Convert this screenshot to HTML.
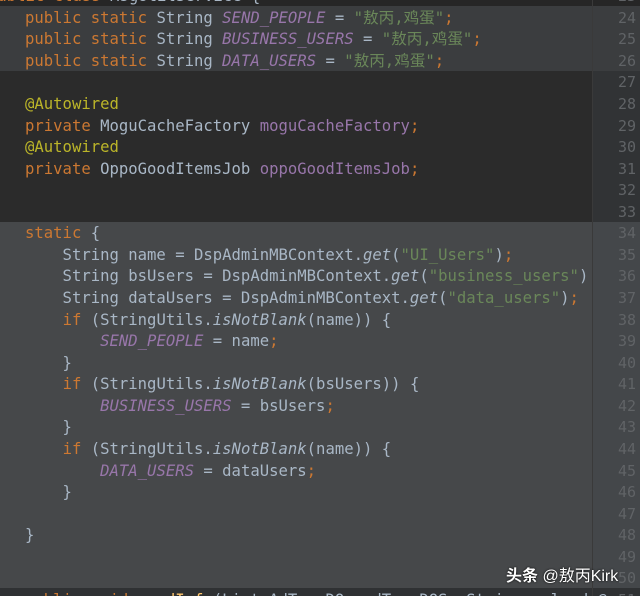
<!DOCTYPE html>
<html><head><meta charset="utf-8"><style>
html,body{margin:0;padding:0;width:640px;height:596px;overflow:hidden;background:#2b2b2b;}
#w{position:relative;width:640px;height:596px;overflow:hidden;}
.bg{position:absolute;left:0;width:640px;}
.ln{position:absolute;left:0;height:21.56px;line-height:21.56px;margin-top:1.5px;font-family:"DejaVu Sans Mono","Liberation Mono","Noto Sans CJK SC",monospace;font-size:15.6px;color:#a9b7c6;white-space:pre;}
.num{position:absolute;right:4px;width:40px;text-align:right;height:21.56px;line-height:21.56px;margin-top:1.5px;font-family:"DejaVu Sans Mono",monospace;font-size:15px;color:#606366;}
.k{color:#cc7832}.c{color:#9876aa;font-style:italic}.s{color:#6a8759}.a{color:#bbb529}.i{font-style:italic}
.f{color:#9876aa}
</style></head><body><div id="w">
<div class="bg" style="top:0;height:6px;background:#262626"></div>
<div class="bg" style="top:6px;height:65px;background:#3b3d3f"></div>
<div class="bg" style="top:71px;height:151px;background:#2b2b2b"></div>
<div class="bg" style="top:222px;height:366px;background:#46484a"></div>
<div class="bg" style="top:588px;height:8px;background:#2f3133"></div>
<div style="position:absolute;left:592px;top:0;width:1px;height:596px;background:#3a3a3a"></div>
<div style="position:absolute;left:593px;top:71px;width:47px;height:151px;background:#313335"></div>
<div style="position:absolute;left:593px;top:222px;width:47px;height:366px;background:#44474a"></div>

<div class="ln" style="top:-15.4px;left:-12px"><span class="k">public class</span> MsgUtilService {</div>
<div class="ln" style="top:6.2px;left:25px"><span class="k">public static</span> String <span class="c">SEND_PEOPLE</span> = <span class="s">"敖丙,鸡蛋"</span><span class="k">;</span></div>
<div class="ln" style="top:27.8px;left:25px"><span class="k">public static</span> String <span class="c">BUSINESS_USERS</span> = <span class="s">"敖丙,鸡蛋"</span><span class="k">;</span></div>
<div class="ln" style="top:49.3px;left:25px"><span class="k">public static</span> String <span class="c">DATA_USERS</span> = <span class="s">"敖丙,鸡蛋"</span><span class="k">;</span></div>
<div class="ln" style="top:92.4px;left:25px"><span class="a">@Autowired</span></div>
<div class="ln" style="top:114px;left:25px"><span class="k">private</span> MoguCacheFactory <span class="f">moguCacheFactory</span><span class="k">;</span></div>
<div class="ln" style="top:135.6px;left:25px"><span class="a">@Autowired</span></div>
<div class="ln" style="top:157.1px;left:25px"><span class="k">private</span> OppoGoodItemsJob <span class="f">oppoGoodItemsJob</span><span class="k">;</span></div>
<div class="ln" style="top:221.8px;left:25px"><span class="k">static</span> {</div>
<div class="ln" style="top:243.4px;left:25px">    String name = DspAdminMBContext.<span class="i">get</span>(<span class="s">"UI_Users"</span>)<span class="k">;</span></div>
<div class="ln" style="top:264.9px;left:25px">    String bsUsers = DspAdminMBContext.<span class="i">get</span>(<span class="s">"business_users"</span>)</div>
<div class="ln" style="top:286.5px;left:25px">    String dataUsers = DspAdminMBContext.<span class="i">get</span>(<span class="s">"data_users"</span>)<span class="k">;</span></div>
<div class="ln" style="top:308.1px;left:25px">    <span class="k">if</span> (StringUtils.<span class="i">isNotBlank</span>(name)) {</div>
<div class="ln" style="top:329.6px;left:25px">        <span class="c">SEND_PEOPLE</span> = name<span class="k">;</span></div>
<div class="ln" style="top:351.2px;left:25px">    }</div>
<div class="ln" style="top:372.8px;left:25px">    <span class="k">if</span> (StringUtils.<span class="i">isNotBlank</span>(bsUsers)) {</div>
<div class="ln" style="top:394.3px;left:25px">        <span class="c">BUSINESS_USERS</span> = bsUsers<span class="k">;</span></div>
<div class="ln" style="top:415.9px;left:25px">    }</div>
<div class="ln" style="top:437.4px;left:25px">    <span class="k">if</span> (StringUtils.<span class="i">isNotBlank</span>(name)) {</div>
<div class="ln" style="top:459px;left:25px">        <span class="c">DATA_USERS</span> = dataUsers<span class="k">;</span></div>
<div class="ln" style="top:480.6px;left:25px">    }</div>
<div class="ln" style="top:523.7px;left:25px">}</div>
<div class="ln" style="top:588.4px;left:25px"><span class="k">public void</span> <span style="color:#ffc66d">sendInfo</span>(List&lt;AdTypeDO&gt; adTypeDOS, String upload @</div>

<div class="num" style="top:-15.4px">23</div>
<div class="num" style="top:6.2px">24</div>
<div class="num" style="top:27.8px">25</div>
<div class="num" style="top:49.3px">26</div>
<div class="num" style="top:70.9px">27</div>
<div class="num" style="top:92.4px">28</div>
<div class="num" style="top:114px">29</div>
<div class="num" style="top:135.6px">30</div>
<div class="num" style="top:157.1px">31</div>
<div class="num" style="top:178.7px">32</div>
<div class="num" style="top:200.3px">33</div>
<div class="num" style="top:221.8px">34</div>
<div class="num" style="top:243.4px">35</div>
<div class="num" style="top:264.9px">36</div>
<div class="num" style="top:286.5px">37</div>
<div class="num" style="top:308.1px">38</div>
<div class="num" style="top:329.6px">39</div>
<div class="num" style="top:351.2px">40</div>
<div class="num" style="top:372.8px">41</div>
<div class="num" style="top:394.3px">42</div>
<div class="num" style="top:415.9px">43</div>
<div class="num" style="top:437.4px">44</div>
<div class="num" style="top:459px">45</div>
<div class="num" style="top:480.6px">46</div>
<div class="num" style="top:502.1px">47</div>
<div class="num" style="top:523.7px">48</div>
<div class="num" style="top:545.3px">49</div>
<div class="num" style="top:566.8px">50</div>
<div class="num" style="top:588.4px">51</div>

<div style="position:absolute;left:506px;top:562px;font-family:'Liberation Sans','Noto Sans CJK SC',sans-serif;font-size:16px;color:#fff;text-shadow:0 0 2px #000;white-space:nowrap"><b>头条</b> @敖丙Kirk</div>
</div></body></html>
